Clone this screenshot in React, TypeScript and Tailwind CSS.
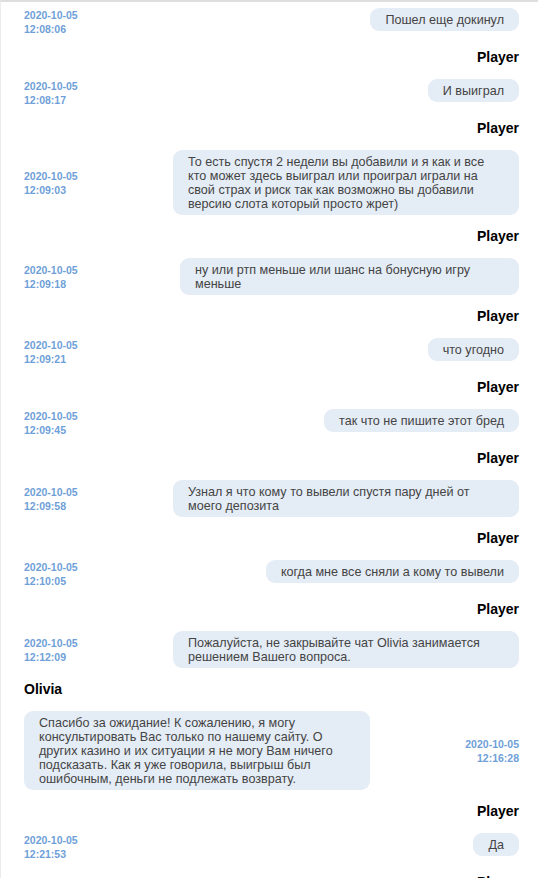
import React from "react";

type Msg = {
  who: "Player" | "Olivia";
  date: string;
  time: string;
  text: string;
  w?: string;
};

const msgs: Msg[] = [
  { who: "Player", date: "2020-10-05", time: "12:08:06", text: "Пошел еще докинул" },
  { who: "Player", date: "2020-10-05", time: "12:08:17", text: "И выиграл" },
  {
    who: "Player",
    date: "2020-10-05",
    time: "12:09:03",
    text: "То есть спустя 2 недели вы добавили и я как и все кто может здесь выиграл или проиграл играли на свой страх и риск так как возможно вы добавили версию слота который просто жрет)",
  },
  {
    who: "Player",
    date: "2020-10-05",
    time: "12:09:18",
    text: "ну или ртп меньше или шанс на бонусную игру меньше",
    w: "w-[339px]",
  },
  { who: "Player", date: "2020-10-05", time: "12:09:21", text: "что угодно" },
  { who: "Player", date: "2020-10-05", time: "12:09:45", text: "так что не пишите этот бред" },
  {
    who: "Player",
    date: "2020-10-05",
    time: "12:09:58",
    text: "Узнал я что кому то вывели спустя пару дней от моего депозита",
  },
  { who: "Player", date: "2020-10-05", time: "12:10:05", text: "когда мне все сняли а кому то вывели" },
  {
    who: "Player",
    date: "2020-10-05",
    time: "12:12:09",
    text: "Пожалуйста, не закрывайте чат Olivia занимается решением Вашего вопроса.",
  },
  {
    who: "Olivia",
    date: "2020-10-05",
    time: "12:16:28",
    text: "Спасибо за ожидание! К сожалению, я могу консультировать Вас только по нашему сайту. О других казино и их ситуации я не могу Вам ничего подсказать. Как я уже говорила, выигрыш был ошибочным, деньги не подлежать возврату.",
  },
  { who: "Player", date: "2020-10-05", time: "12:21:53", text: "Да" },
];

function Stamp({ date, time, right }: { date: string; time: string; right?: boolean }) {
  return (
    <div
      className={
        "self-center shrink-0 text-[10.5px] leading-[14px] font-bold text-[#6f9fd8] " +
        (right ? "text-right" : "text-left")
      }
    >
      <div>{date}</div>
      <div>{time}</div>
    </div>
  );
}

function Bubble({ text, w }: { text: string; w?: string }) {
  return (
    <div
      className={
        "max-w-[346px] rounded-[9px] bg-[#e4ecf6] px-[15px] py-[4.5px] text-[12.6px] leading-[14px] text-[#444444] " +
        (w ?? "")
      }
    >
      {text}
    </div>
  );
}

function Label({ who }: { who: string }) {
  return (
    <div
      className={
        "my-[13px] text-[14px] leading-[17px] font-bold text-black " +
        (who === "Olivia" ? "text-left" : "text-right")
      }
    >
      {who}
    </div>
  );
}

export default function App() {
  return (
    <div
      className="h-[878px] w-[538px] overflow-hidden bg-white border-t-2 border-l border-t-[#dedede] border-l-[#ececec]"
      style={{ fontFamily: '"Liberation Sans", Arial, sans-serif' }}
    >
      <div className="pt-[6px] pl-[23px] pr-[19px]">
        {msgs.map((m, i) => (
          <React.Fragment key={i}>
            {i > 0 && <Label who={m.who} />}
            {m.who === "Olivia" ? (
              <div className="flex items-start justify-between min-h-[28px]">
                <Bubble text={m.text} w={m.w} />
                <Stamp date={m.date} time={m.time} right />
              </div>
            ) : (
              <div className="flex items-start justify-between gap-3 min-h-[28px]">
                <Stamp date={m.date} time={m.time} />
                <Bubble text={m.text} w={m.w} />
              </div>
            )}
          </React.Fragment>
        ))}
        <Label who="Player" />
      </div>
    </div>
  );
}
